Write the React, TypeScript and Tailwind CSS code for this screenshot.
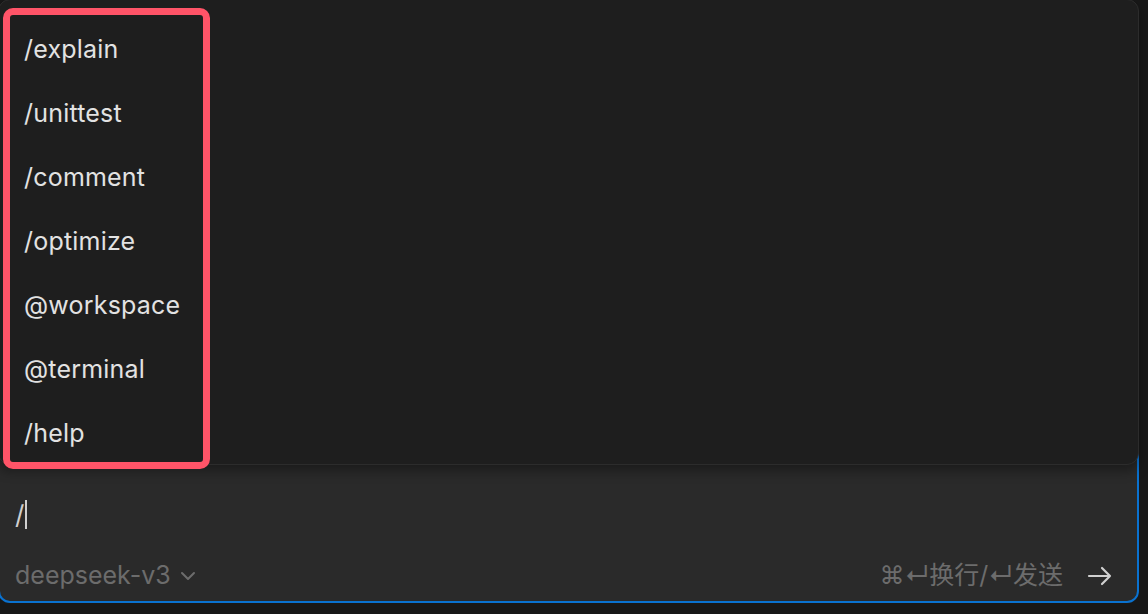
import React from "react";

const commands = [
  "/explain",
  "/unittest",
  "/comment",
  "/optimize",
  "@workspace",
  "@terminal",
  "/help",
];

const CommandMenu = () => (
  <div className="relative z-10 -mt-px -ml-[2px] h-[466px] w-[1141px] rounded-[12px] border border-[#2c2c2c] bg-[#1e1e1e] shadow-[0_6px_12px_rgba(0,0,0,0.35)]">
    <div className="ml-[4px] mt-[8px] h-[461px] w-[207px] rounded-[10px] border-[7px] border-[#ff5468] pt-[3px] pl-[14px]">
      {commands.map((c) => (
        <div key={c} className="flex h-[64px] items-center text-[25px] tracking-[0.2px] text-[#e2e2e2]">
          {c}
        </div>
      ))}
    </div>
  </div>
);

const ChatInput = () => (
  <div className="-mt-[25px] -ml-[2px] flex h-[163px] w-[1141px] flex-col justify-end rounded-[12px] border-2 border-[#0a72d0] bg-[#2a2a2a] pb-[7px] pl-[15px] pr-[24px]">
    <div className="flex h-[40px] items-center text-[26px] text-[#cfcfcf]">
      <span>/</span>
      <span className="ml-[1px] h-[29px] w-[2px] bg-[#cfcfcf]" />
    </div>
    <div className="mt-[24px] flex h-[36px] items-center justify-between">
      <div className="flex items-center gap-[7px] text-[25px] text-[#6c6c6c]">
        <span>deepseek-v3</span>
        <svg width="20" height="20" viewBox="0 0 20 20" fill="none" stroke="#6c6c6c" strokeWidth="2" strokeLinecap="round" strokeLinejoin="round">
          <path d="M4 7l6 6 6-6" />
        </svg>
      </div>
      <div className="flex items-center gap-[24px]">
        <span className="text-[25px] text-[#6c6c6c] font-['Inter','Noto_Sans_CJK_SC',sans-serif]">
          ⌘↵换行/↵发送
        </span>
        <svg width="26" height="24" viewBox="0 0 26 24" fill="none" stroke="#d0d0d0" strokeWidth="2.2" strokeLinecap="round" strokeLinejoin="round">
          <path d="M2 12h21M15 4l8 8-8 8" />
        </svg>
      </div>
    </div>
  </div>
);

export default function App() {
  return (
    <div className="h-[614px] w-[1148px] overflow-hidden bg-[#181818] font-['Inter','Noto_Sans_CJK_SC',sans-serif]">
      <CommandMenu />
      <ChatInput />
    </div>
  );
}
